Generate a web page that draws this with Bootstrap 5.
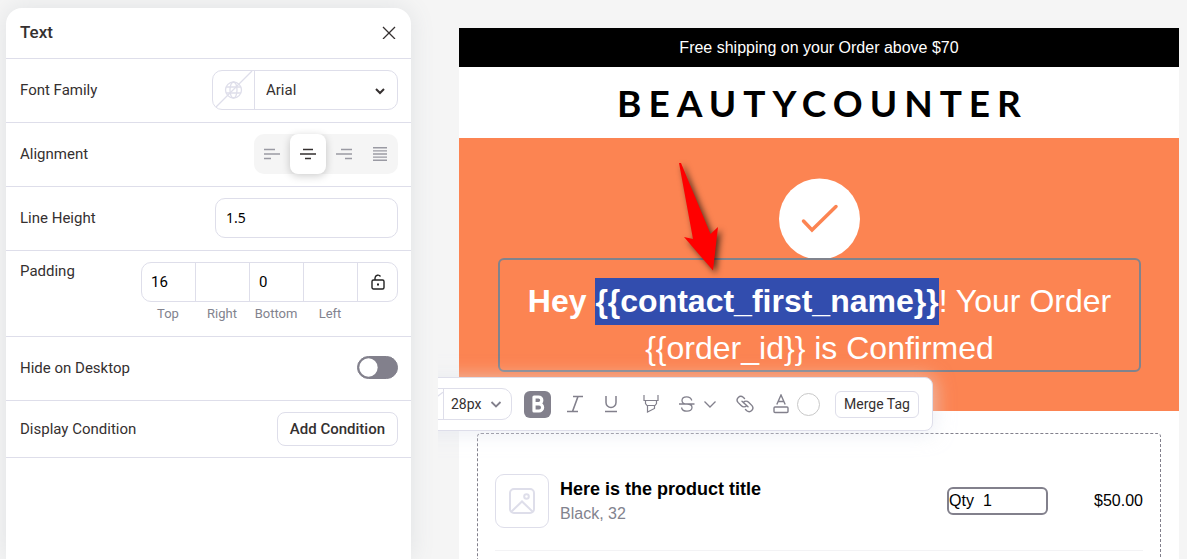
<!DOCTYPE html>
<html lang="en">
<head>
<meta charset="utf-8">
<meta name="viewport" content="width=device-width, initial-scale=1">
<title>Email editor</title>
<link rel="stylesheet" href="https://cdn.jsdelivr.net/npm/bootstrap@5.3.0/dist/css/bootstrap.min.css">
<style>
  :root { --line: #dedeea; --ink: #353030; --muted: #82838e; --orange: #fc8452; }
  body { font-family: Roboto, "Liberation Sans", sans-serif; font-size: 15px; line-height: 20px; color: var(--ink); background: #f5f5f5; }
  svg { display: block; flex-shrink: 0; fill: none; }

  /* settings panel */
  .settings { width: 405px; margin: 8px 0 0 6px; border-radius: 16px 16px 0 0; box-shadow: 0 0 24px rgba(100, 110, 125, .14); }
  .setting { padding: 10px 13px 12px 14px; border-bottom: 1px solid var(--line); min-height: 64px; }
  .setting-head { min-height: 51px; padding-top: 0; padding-bottom: 2px; }
  .setting-last { min-height: 57px; padding-bottom: 10px; }
  .panel-title { font-size: 17px; font-weight: 500; }
  .field { border: 1px solid var(--line); border-radius: 10px; height: 40px; background: #fff; overflow: hidden; }
  .field select, .field input { border: 0; outline: 0; background: transparent; color: inherit; height: 100%; min-width: 0; }
  .field select { appearance: none; }
  .cell-split { border-right: 1px solid var(--line); }
  .font-field { width: 186px; }
  .font-field select { padding-left: 11px; width: 100%; }
  .overlay-chev { position: absolute; right: 10px; top: 12px; pointer-events: none; }
  .height-field { width: 183px; font-family: "Noto Sans", sans-serif; font-size: 14px; color: #000; padding: 0 10px; }
  .align-set { background: #f5f5f5; border-radius: 10px; height: 40px; }
  .align-set button { width: 36px; height: 40px; border-radius: 8px; border: 0; background: transparent; color: #9a9aa3; }
  .align-set .chosen { background: #fff; color: #353030; box-shadow: 0 2px 8px rgba(0, 0, 0, .2); }
  .pad-row { min-height: 86px; }
  .pad-field { width: 257px; color: #000; margin-top: 1px; }
  .pad-field input { width: 54px; padding: 0 9px; border-right: 1px solid var(--line); }
  .pad-names label { width: 54px; text-align: center; font-size: 13px; color: var(--muted); }
  .pad-names { line-height: 16px; margin-top: 4px; }
  .form-switch .toggle { width: 41px; height: 23px; margin: 0; background-color: #82808c; border-color: #82808c; box-shadow: none;
    background-image: url("data:image/svg+xml,%3csvg xmlns='http://www.w3.org/2000/svg' viewBox='-4 -4 8 8'%3e%3ccircle r='3.5' fill='%23fff'/%3e%3c/svg%3e"); }
  .outline-btn { border: 1px solid var(--line); background: #fff; color: var(--ink); border-radius: 8px; padding: 0 12px; height: 34px; font-weight: 500; }

  /* email canvas */
  .canvas { margin-left: 27px; padding: 28px 8px 0 21px; overflow: hidden; font-family: "Liberation Sans", Arial, sans-serif; font-size: 16px; color: #000; }
  .email { max-width: 720px; min-height: 100%; }
  .promo { background: #000; color: #fff; height: 39px; }
  .brand { height: 71px; padding-left: 7px; font-family: Lato, sans-serif; font-weight: 700; font-size: 37px; line-height: 71px; letter-spacing: 7px; }
  .hero { background: var(--orange); padding: 40px 38px 39px 39px; }
  .headline { border: 2px solid #80838d; border-radius: 6px; color: #fff; padding-top: 18px; }
  .headline p { font-size: 32px; line-height: 47px; margin: 0 24px -2px; }
  .picked { background: #324dae; color: #fff; font-weight: 700; padding: 5px 0 6px; }
  .pointer { position: absolute; left: 172px; top: -104px; filter: drop-shadow(3px 3px 3px rgba(0, 0, 0, .65)); z-index: 3; }

  /* floating text toolbar */
  .tools { position: absolute; left: -109px; top: 117px; z-index: 2; width: 542px; height: 54px; padding: 0 13px 0 11px; gap: 12px; border: 1px solid var(--line);
    border-radius: 8px; background: #fff; color: #82808c; box-shadow: 0 2px 18px 3px rgba(226, 229, 238, .55); font-size: 14px; font-family: Roboto, sans-serif; }
  .tools button { border: 0; background: transparent; color: inherit; padding: 0; width: 24px; height: 27px; display: flex; align-items: center; justify-content: center; }
  .tools .field { height: 32px; color: var(--ink); }
  .tools .field select { width: 67px; padding-left: 7px; }
  .tools .overlay-chev { right: 9px; top: 9px; }
  .tools .bold-on { width: 27px; background: #82808c; border-radius: 6px; }
  .tools .link-btn { width: 32px; }
  .tools .merge { width: 84px; border: 1px solid var(--line); border-radius: 6px; color: var(--ink); white-space: nowrap; margin-left: auto; }
  .tools .swatch { width: 23px; height: 23px; border-radius: 50%; border: 1px solid #c8c8c8; background: #fff; }

  /* product list */
  .products { margin: 22px 18px 0; border: 1px dashed #82808c; border-radius: 4px; padding: 40px 17px 60px; }
  .product { gap: 11px; padding-bottom: 22px; border-bottom: 1px solid #f3f3f5; }
  .thumb { width: 54px; height: 54px; border: 1px solid var(--line); border-radius: 9px; }
  .product-name { font-size: 18px; line-height: 26px; font-weight: 700; margin: 0; }
  .product-kind { color: var(--muted); line-height: 24px; margin: 0; }
  .qty { border: 2px solid #82808c; border-radius: 6px; width: 101px; height: 28px; gap: 9px; margin-right: 35px; }
  .qty input { border: 0; outline: 0; padding: 0; width: 50px; color: #000; background: transparent; }
</style>
</head>
<body>
<div class="d-flex vh-100 overflow-hidden">

  <aside class="settings bg-white flex-shrink-0">
    <div class="setting setting-head d-flex align-items-center justify-content-between">
      <h1 class="panel-title m-0">Text</h1>
      <button class="border-0 bg-transparent p-0 text-reset" aria-label="Close">
        <svg width="18" height="14" viewBox="0 0 18 14" stroke="currentColor" stroke-width="1.300"><path d="M3 2 15 14M15 2 3 14"/></svg>
      </button>
    </div>

    <div class="setting d-flex align-items-center justify-content-between">
      <label for="family">Font Family</label>
      <div class="field font-field d-flex">
        <svg class="cell-split" width="42" height="38" viewBox="0 0 41 38" stroke="#dedeea" stroke-width="1.300">
          <path d="M2 37 39 0"/><circle cx="20.500" cy="19" r="8"/><ellipse cx="20.500" cy="19" rx="3.500" ry="8"/><path d="M13 16h15M13 22h15"/>
        </svg>
        <div class="position-relative flex-grow-1">
          <select id="family"><option>Arial</option></select>
          <svg class="overlay-chev" width="14" height="14" viewBox="0 0 14 14" stroke="currentColor" stroke-width="2"><path d="M3 6 7 10 11 6"/></svg>
        </div>
      </div>
    </div>

    <div class="setting d-flex align-items-center justify-content-between">
      <span id="align-label">Alignment</span>
      <div class="align-set d-flex" role="group" aria-labelledby="align-label">
        <button class="p-0" aria-label="Left"><svg class="mx-auto" width="16" height="14" viewBox="0 0 16 14" stroke="currentColor" stroke-width="1.300"><path d="M0 2.500h11M0 7h16M0 11.500h7"/></svg></button>
        <button class="p-0 chosen" aria-label="Center"><svg class="mx-auto" width="16" height="14" viewBox="0 0 16 14" stroke="currentColor" stroke-width="1.300"><path d="M3 2.500h10M0 7h16M5 11.500h6"/></svg></button>
        <button class="p-0" aria-label="Right"><svg class="mx-auto" width="16" height="14" viewBox="0 0 16 14" stroke="currentColor" stroke-width="1.300"><path d="M5 2.500h11M0 7h16M9 11.500h7"/></svg></button>
        <button class="p-0" aria-label="Justify"><svg class="mx-auto" width="14" height="14" viewBox="0 0 14 14" stroke="currentColor" stroke-width="1.400"><path d="M0 .8h14M0 3.900h14M0 7h14M0 10.100h14M0 13.200h14"/></svg></button>
      </div>
    </div>

    <div class="setting d-flex align-items-center justify-content-between">
      <label for="lh">Line Height</label>
      <input id="lh" class="field height-field" value="1.5">
    </div>

    <div class="setting pad-row d-flex justify-content-between">
      <span>Padding</span>
      <div>
        <div class="field pad-field d-flex align-items-center">
          <input id="pt" value="16"><input id="pr"><input id="pb" value="0"><input id="pl">
          <button class="border-0 bg-transparent p-0 mx-auto" aria-label="Link sides">
            <svg width="14" height="16" viewBox="0 0 14 16" stroke="#222" stroke-width="1.400"><rect x="1" y="6" width="12" height="9" rx="1.500"/><path d="M4 6V4a3 3 0 0 1 5.500-1.500"/><path d="M6 10.500h2" stroke-width="2"/></svg>
          </button>
        </div>
        <div class="pad-names d-flex">
          <label for="pt">Top</label><label for="pr">Right</label><label for="pb">Bottom</label><label for="pl">Left</label>
        </div>
      </div>
    </div>

    <div class="setting d-flex align-items-center justify-content-between">
      <label for="hide">Hide on Desktop</label>
      <div class="form-check form-switch p-0 m-0 d-flex"><input id="hide" class="form-check-input toggle" type="checkbox" role="switch"></div>
    </div>

    <div class="setting setting-last d-flex align-items-center justify-content-between">
      <span>Display Condition</span>
      <button class="outline-btn">Add Condition</button>
    </div>
  </aside>

  <main class="canvas flex-grow-1">
    <div class="email bg-white">
      <div class="promo d-flex align-items-center justify-content-center">Free shipping on your Order above $70</div>
      <div class="brand text-center">BEAUTYCOUNTER</div>

      <section class="hero">
        <svg class="mx-auto" width="81" height="80" viewBox="0 0 81 80"><circle cx="40.500" cy="41" r="40.500" fill="#fff"/><path d="M24.500 43 33 52 57 28.500" stroke="#fc8452" stroke-width="3.500" stroke-linecap="round"/></svg>
        <div class="headline position-relative text-center">
          <p><b>Hey </b><span class="picked">{{contact_first_name}}</span><span>! Your Order</span> <span>{{order_id}} is Confirmed</span></p>

          <svg class="pointer" width="56" height="120" viewBox="672 156 56 120"><path d="M679 163h2L710.500 234 718 227 713 270.500 684 237 693 239Z" fill="#f00"/></svg>

          <div class="tools d-flex align-items-center" role="toolbar" aria-label="Text formatting">
            <div class="field d-flex">
              <svg class="cell-split" width="40" height="30" viewBox="0 0 40 30" stroke="#dedeea" stroke-width="1.300"><path d="M4 30 40 3"/></svg>
              <div class="position-relative">
                <select aria-label="Font size"><option>28px</option></select>
                <svg class="overlay-chev" width="12" height="12" viewBox="0 0 12 12" stroke="#82808c" stroke-width="1.800"><path d="M1.500 4 6 8.500 10.500 4"/></svg>
              </div>
            </div>
            <button class="bold-on" aria-label="Bold"><svg width="14" height="18" viewBox="0 0 14 18" stroke="#fff" stroke-width="3.200" stroke-linejoin="round"><path d="M3 2h4.500a3.300 3.300 0 0 1 0 6.600H3ZM3 8.800h5a3.600 3.600 0 0 1 0 7.200H3Z"/></svg></button>
            <button aria-label="Italic"><svg width="16" height="18" viewBox="0 0 16 18" stroke="currentColor" stroke-width="1.600"><path d="M6 1.500h10M0 16.500h11M11 1.500 5.500 16.500"/></svg></button>
            <button aria-label="Underline"><svg width="14" height="18" viewBox="0 0 14 18" stroke="currentColor" stroke-width="1.500"><path d="M2 1v6.500a5 5 0 0 0 10 0V1M1 16.500h12"/></svg></button>
            <button class="ms-1" aria-label="Highlight"><svg width="16" height="18" viewBox="0 0 16 18" stroke="currentColor" stroke-width="1.200"><path d="M1 0v5.500h14V0M2.500 5.500v3L4 10.500h8l1.500-2v-3M4.500 10.500v6.500l7-3.500v-3"/></svg></button>
            <div class="d-flex align-items-center gap-1">
              <button aria-label="Strikethrough"><svg width="16" height="16" viewBox="0 0 16 16" stroke="currentColor" stroke-width="1.300"><path d="M0 8h15.500M12.800 4.500C12 2 10 .8 7.700.8 5 .8 3 2.300 3 4.500S5 8 8 8s5 1.200 5 3.500-2 3.700-5 3.700-5-1.200-5.500-3.700"/></svg></button>
              <button class="w-auto" aria-label="More"><svg width="14" height="12" viewBox="0 0 14 12" stroke="currentColor" stroke-width="1.300"><path d="M1.500 3.500 7 9 12.500 3.500"/></svg></button>
            </div>
            <button class="link-btn" aria-label="Link"><svg width="18" height="18" viewBox="0 0 18 18" stroke="currentColor" stroke-width="1.400" stroke-linecap="round"><path d="M8.500 3.500 7.200 2.200A3.700 3.700 0 0 0 2 7.400l3.400 3.400a3.700 3.700 0 0 0 5.200 0M9.500 14.500l1.300 1.300A3.700 3.700 0 0 0 16 10.600L12.600 7.200a3.700 3.700 0 0 0-5.200 0M6 6.300l6 5.400"/></svg></button>
            <div class="d-flex align-items-center gap-2">
              <svg width="16" height="20" viewBox="0 0 16 20" stroke="currentColor" stroke-width="1.400"><path d="M3.800 10.500 8 1l4.200 9.500M5.200 7.500h5.600"/><rect x="1" y="13" width="14" height="5.500" rx="1"/></svg>
              <button class="swatch" aria-label="Text color"></button>
            </div>
            <button class="merge">Merge Tag</button>
          </div>
        </div>
      </section>

      <section class="products">
        <div class="product d-flex align-items-center">
          <div class="thumb d-flex align-items-center justify-content-center">
            <svg width="28" height="28" viewBox="0 0 28 28" stroke="#dedeea" stroke-width="2"><rect x="2" y="2" width="24" height="24" rx="4"/><circle cx="18.500" cy="9.500" r="2.300"/><path d="M3 25 14 14.500 25 25"/></svg>
          </div>
          <div class="flex-grow-1">
            <h2 class="product-name">Here is the product title</h2>
            <p class="product-kind">Black, 32</p>
          </div>
          <div class="qty d-flex align-items-center"><label for="qty">Qty</label><input id="qty" value="1"></div>
          <span>$50.00</span>
        </div>
      </section>
    </div>
  </main>
</div>
<script src="https://cdn.jsdelivr.net/npm/bootstrap@5.3.0/dist/js/bootstrap.bundle.min.js"></script>
</body>
</html>
